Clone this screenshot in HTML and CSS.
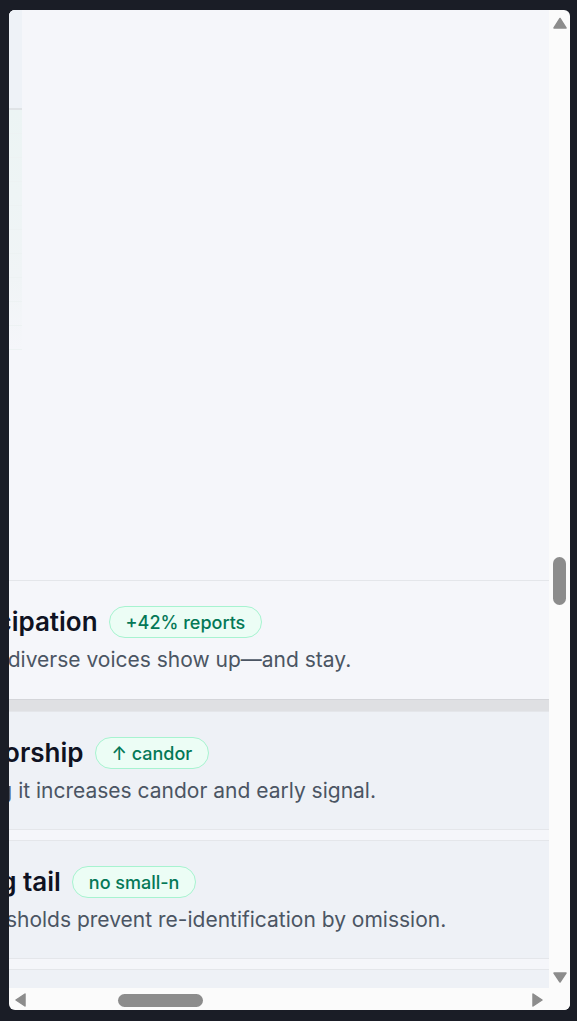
FILE: index.html
```html
<!DOCTYPE html>
<html lang="en">
<head>
<meta charset="utf-8">
<title>Signals</title>
<link rel="stylesheet" href="styles.css">
</head>
<body>
<div class="frame">
  <div class="viewport" id="viewport">
    <div class="canvas">
      <section class="hero">
        <div class="hero-panel">
          <div class="panel-head"></div>
          <div class="panel-rows">
            <div class="panel-row"></div><div class="panel-row"></div><div class="panel-row"></div>
            <div class="panel-row"></div><div class="panel-row"></div><div class="panel-row"></div>
            <div class="panel-row"></div><div class="panel-row"></div><div class="panel-row"></div>
            <div class="panel-row"></div>
          </div>
        </div>
      </section>
      <section class="cards">
        <article class="card card--active">
          <div class="card-head"><h3 class="card-title">Healthier participation</h3><span class="pill">+42% reports</span></div>
          <p class="card-desc">Measures whether diverse voices show up—and stay.</p>
        </article>
        <article class="card">
          <div class="card-head"><h3 class="card-title">Founder sponsorship</h3><span class="pill">↑ candor</span></div>
          <p class="card-desc">Leadership backing it increases candor and early signal.</p>
        </article>
        <article class="card">
          <div class="card-head"><h3 class="card-title">Protect the long tail</h3><span class="pill">no small-n</span></div>
          <p class="card-desc">Hard minimum thresholds prevent re-identification by omission.</p>
        </article>
        <article class="card">
          <div class="card-head"><h3 class="card-title">Close the loop</h3><span class="pill">trust ↑</span></div>
          <p class="card-desc">Share what changed so people keep speaking up.</p>
        </article>
      </section>
    </div>
  </div>
  <div class="vbar">
    <svg class="arrow arrow-up" width="14" height="12" viewBox="0 0 14 12"><polygon points="7,1.5 13,11 1,11"/></svg>
    <div class="vtrack"><div class="thumb vthumb" style="margin-top: 528px"></div></div>
    <svg class="arrow arrow-down" width="14" height="11" viewBox="0 0 14 11"><polygon points="1,1 13,1 7,10"/></svg>
  </div>
  <div class="hbar">
    <svg class="arrow arrow-left" width="11" height="14" viewBox="0 0 11 14"><polygon points="1,7 10,1 10,13"/></svg>
    <div class="htrack"><div class="thumb hthumb" style="margin-left: 92px"></div></div>
    <svg class="arrow arrow-right" width="11" height="14" viewBox="0 0 11 14"><polygon points="1,1 10,7 1,13"/></svg>
  </div>
  <div class="corner"></div>
</div>
<script src="script.js"></script>
</body>
</html>
```
FILE: styles.css
```css
html, body { margin: 0; }
body {
  background: #1a1d26;
  padding: 10px 7px 11px 9px;
  font-family: "Inter", "Noto Sans", sans-serif;
}
.frame {
  width: 561px;
  height: 1000px;
  border-radius: 6px;
  overflow: hidden;
  display: grid;
  grid-template-columns: 540px 21px;
  grid-template-rows: 978px 22px;
  background: #fbfbfb;
}
.viewport {
  overflow: hidden;
  background: #f5f6fa;
}
.canvas {
  width: 3160px;
  min-height: 19000px;
  padding-left: 240px;
  box-sizing: border-box;
}
.hero {
  height: 10670px;
  display: flex;
  flex-direction: column;
  justify-content: flex-end;
  padding-bottom: 230px;
  box-sizing: border-box;
}
.hero-panel {
  width: 233px;
  background: #eef2f7;
}
.panel-head {
  height: 320px;
  border-bottom: 2px solid #dfe3e6;
}
.panel-rows {
  background: linear-gradient(#ecf4f4, #f0f4f6 70%, #f5f6fa);
}
.panel-row {
  height: 24px;
  box-sizing: border-box;
  border-bottom: 1px solid #edf2f3;
}
.cards {
  display: flex;
  flex-direction: column;
  gap: 10px;
}
.card {
  background: #eef1f6;
  border-top: 1px solid #e4e6ea;
  border-bottom: 1px solid #e4e6ea;
  padding: 25px 0 25px 28px;
}
.card--active {
  background: #f5f6fa;
  padding-bottom: 26px;
  margin-bottom: 1px;
  border-bottom-color: #d4d5d9;
  box-shadow: 0 11px 0 #dfe0e3;
}
.card-head {
  display: flex;
  align-items: center;
  gap: 11px;
  height: 32px;
}
.card-title {
  margin: 0;
  font-size: 26px;
  line-height: 32px;
  font-weight: 600;
  color: #0f1222;
  white-space: nowrap;
}
.pill {
  display: inline-flex;
  align-items: center;
  height: 32px;
  box-sizing: border-box;
  padding: 0 16px;
  border: 1.5px solid #a7f3d0;
  border-radius: 999px;
  background: #ecfdf5;
  color: #047857;
  font-size: 18px;
  font-weight: 500;
  white-space: nowrap;
}
.card-desc {
  margin: 9px 0 0;
  font-size: 21px;
  line-height: 26px;
  color: #4b5563;
  white-space: nowrap;
}
.arrow polygon {
  fill: #8c8c8c;
  stroke: #8c8c8c;
  stroke-width: 1.5;
  stroke-linejoin: round;
}
.arrow { display: block; flex: none; }
.vbar {
  display: flex;
  flex-direction: column;
  align-items: center;
  padding: 7px 0 5px;
  box-sizing: border-box;
  min-height: 0;
}
.vtrack {
  flex: 1;
  width: 13px;
  display: flex;
  flex-direction: column;
}
.hbar {
  display: flex;
  align-items: center;
  padding: 2px 6px 0;
  box-sizing: border-box;
}
.htrack {
  flex: 1;
  height: 13px;
  display: flex;
}
.thumb {
  background: #8c8c8c;
  border-radius: 7px;
  flex: none;
}
.vthumb { width: 13px; height: 48px; }
.hthumb { width: 85px; height: 13px; }
.corner { background: #fbfbfb; }
```
FILE: script.js
```js
var v = document.getElementById('viewport');
v.scrollLeft = 460;
v.scrollTop = 10100;
```
